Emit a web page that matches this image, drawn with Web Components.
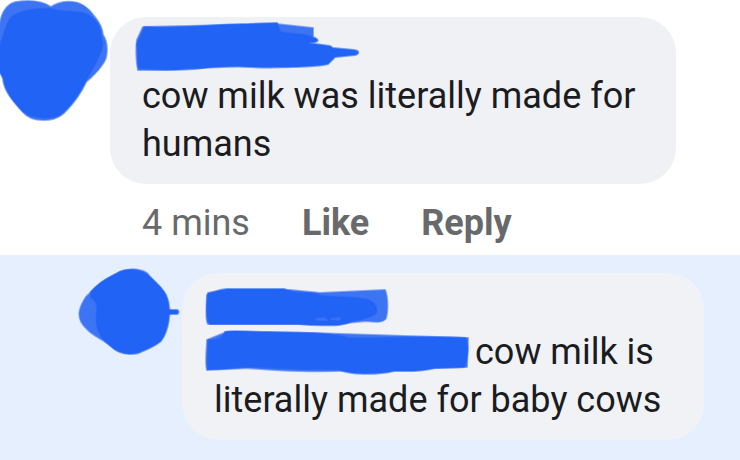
<!DOCTYPE html>
<html lang="en">
<head>
<meta charset="utf-8">
<meta name="viewport" content="width=device-width, initial-scale=1">
<title>Comments</title>
<style>
  body {
    --clr-text: #1b1c1f;
    --clr-muted: #68696b;
    --clr-bubble: #f0f1f5;
    --clr-marker: #2163f5;
    --clr-marker-light: #3d74f3;
    margin: 0;
    min-height: 100vh;
    display: flex;
    flex-direction: column;
    background: #fff;
    color: var(--clr-text);
    font: 36px/48px Roboto, "Liberation Sans", sans-serif;
  }
  .reply {
    flex: 1;
    background: #e5effe;
    --indent: 182px;
    --end: 36px;
    --top: 18px;
    --clr-bubble: #f0f2f6;
  }
</style>
</head>
<body>
  <user-comment>
    <marker-scribble slot="avatar" shape="heart"></marker-scribble>
    <marker-scribble slot="name" shape="long-name"></marker-scribble>
    cow milk was literally made for humans
    <comment-actions slot="actions" time="4 mins"></comment-actions>
  </user-comment>
  <user-comment class="reply">
    <marker-scribble slot="avatar" shape="round"></marker-scribble>
    <marker-scribble slot="name" shape="short-name"></marker-scribble>
    <marker-scribble shape="mention"></marker-scribble>cow milk is literally made for baby cows
  </user-comment>

<script>
const SHAPES = {
  "heart": {
    box: [0, 0, 110, 122],
    svg: `
      <path class="light" d="M0 23C2 12 7 4 16 2C29 0 42 1 51 7C57 3 65 1 73 2C83 3 89 9 94 16C99 22 102 27 103 35C108 42 108 56 104 62C98 72 91 77 86 82C80 95 71 106 64 113C57 119 51 120 43 120C34 120 27 117 22 111C13 101 4 91 3 79L0 71Z"/>
      <path d="M0 46C4 36 6 24 11 18C18 11 35 8 51 9C68 14 81 9 91 17C99 23 101 31 101 38C105 45 99 56 95 64L86 80C79 94 70 106 62 113C56 119 33 120 23 111C13 101 5 90 4 78L0 72Z"/>`
  },
  "round": {
    box: [0, 255, 182, 106],
    svg: `
      <path class="light" d="M91 292C101 280 110 277 116 274C124 268 138 268 147 273C155 283 165 289 167 298C172 310 169 330 161 341C154 347 145 350 139 353C128 356 117 352 112 347C104 339 94 337 87 329C76 319 78 309 86 297Z"/>
      <path d="M91 292C102 280 111 277 120 272C132 268 142 271 147 275C157 284 164 290 167 299C170 313 168 331 160 341C152 347 143 350 138 352C127 355 118 352 111 346L106 342C99 335 95 326 97 312C98 304 95 300 91 297Z"/>
      <path d="M166 310L177 310C179 311 179 313 177 314L166 314Z"/>`
  },
  "long-name": {
    box: [132, 24, 232, 48],
    svg: `
      <path class="light" d="M143 27L276 24L313 28L313 36L305 46L202 68C182 71 154 70 138 70C136 61 136 47 137 40Z"/>
      <path d="M145 27C179 30 213 24 249 24L277 23L280 32C291 35 304 33 312 37C320 39 320 43 308 43L330 46L333 48L354 50C360 51 359 54 355 55L335 57L328 64C317 67 273 68 250 67C230 65 208 69 187 68C169 71 151 68 139 68C137 60 139 52 137 44C140 38 142 34 145 27Z"/>`
  },
  "short-name": {
    box: [204, 280, 186, 48],
    svg: `
      <path class="light" d="M207 295L290 290L320 293L385 290C388 297 388 311 386 318C384 323 374 322 366 321L335 324L208 324C205 320 207 303 207 295Z"/>
      <path d="M208 293C216 292 217 290 227 289L284 289L292 292C302 294 309 292 316 294C322 298 343 296 363 299C373 300 378 306 376 313C371 318 358 320 352 321C342 327 328 325 311 325L299 324L210 324C206 317 207 305 208 293Z"/>
      <path class="light" d="M316 319L324 318L327 320L317 320ZM331 319L340 318L339 320Z"/>`
  },
  "mention": {
    box: [204, 328, 271, 48],
    svg: `
      <path class="light" d="M207 340L227 332L310 333L468 338L467 367L355 370C313 373 276 370 247 368L207 370C205 362 207 348 207 340Z"/>
      <path d="M209 340C217 340 223 339 225 332C232 330 249 332 268 332C293 333 330 332 348 338C380 339 425 336 465 338C469 345 468 358 464 367L435 368C421 372 408 371 394 371C378 375 350 375 338 369C305 370 277 368 259 367C240 366 222 370 208 369C207 359 208 349 209 340Z"/>`
  }
};

// Felt-pen blot that hides a picture or a name
class MarkerScribble extends HTMLElement {
  constructor() {
    super();
    this.attachShadow({mode: "open"});
  }

  connectedCallback() {
    const {box, svg} = SHAPES[this.getAttribute("shape")];
    this.shadowRoot.innerHTML = `
      <style>
        :host {
          display: inline-block;
          vertical-align: top;
        }
        svg {
          display: block;
          overflow: visible;
          fill: var(--clr-marker);
          stroke: var(--clr-marker);
          stroke-opacity: .6;
          stroke-width: 2;
          stroke-linejoin: round;
        }
        .light {
          fill: var(--clr-marker-light);
          stroke: var(--clr-marker-light);
        }
      </style>
      <svg width="${box[2]}" height="${box[3]}" viewBox="${box.join(" ")}" aria-hidden="true">${svg}</svg>
    `;
  }
}

class CommentActions extends HTMLElement {
  constructor() {
    super();
    this.attachShadow({mode: "open"});
  }

  connectedCallback() {
    this.shadowRoot.innerHTML = `
      <style>
        :host {
          display: flex;
          gap: 52px;
          padding: 15px 32px 8px;
          color: var(--clr-muted);
        }
        button {
          all: unset;
          font-weight: 700;
          cursor: pointer;
        }
        button:hover, button:focus-visible {
          text-decoration: underline;
        }
      </style>
      <span>${this.getAttribute("time")}</span>
      <button type="button">Like</button>
      <button type="button">Reply</button>
    `;
  }
}

class UserComment extends HTMLElement {
  constructor() {
    super()
      .attachShadow({mode: "open"})
      .append(this.template().content.cloneNode(true));
  }

  template() {
    const template = document.createElement("template");
    template.innerHTML = `
      <style>
        :host {
          display: grid;
          grid-template-columns: var(--indent, 110px) minmax(0, 1fr);
          align-items: start;
          padding-right: var(--end, 64px);
        }
        .avatar {
          display: flex;
        }
        .body {
          padding-top: var(--top, 17px);
        }
        .bubble {
          padding: 7px 32px 16px;
          border-radius: 36px;
          background: var(--clr-bubble);
        }
        .name {
          display: flex;
        }
        p {
          margin: 0;
        }
        .name, ::slotted([shape="mention"]) {
          margin-left: -10px;
        }
      </style>
      <div class="avatar"><slot name="avatar"></slot></div>
      <div class="body">
        <div class="bubble">
          <div class="name"><slot name="name"></slot></div>
          <p><slot></slot></p>
        </div>
        <slot name="actions"></slot>
      </div>
    `;
    return template;
  }
}

customElements.define("marker-scribble", MarkerScribble);
customElements.define("comment-actions", CommentActions);
customElements.define("user-comment", UserComment);
</script>
</body>
</html>
